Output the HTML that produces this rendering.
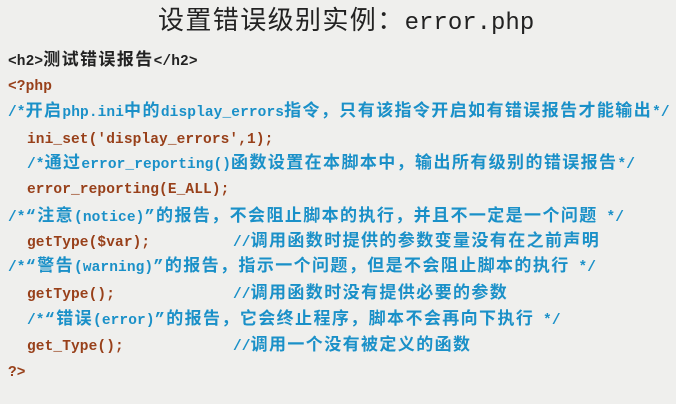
<!DOCTYPE html>
<html><head><meta charset="utf-8"><style>
html,body{margin:0;padding:0}
body{width:676px;height:404px;background:#efefed;position:relative;overflow:hidden;font-family:"Liberation Mono","Noto Sans CJK SC",monospace;}
.t{position:absolute;left:158px;top:4px;font-size:24px;line-height:36px;color:#222;white-space:pre;}
.t i{font-style:normal;font-size:26px;letter-spacing:1.4px}
.l{position:absolute;font-size:14.5px;line-height:22px;letter-spacing:0.1px;font-weight:bold;white-space:pre;}
.l i{font-style:normal;font-size:17px;letter-spacing:1.4px}
.k{color:#222}.b{color:#1a90c8}.r{color:#98401a}
</style></head><body>
<div class="t"><i>设置错误级别实例：</i>error.php</div>
<div class="l k" style="left:8px;top:51px">&lt;h2&gt;<i>测试错误报告</i>&lt;/h2&gt;</div>
<div class="l r" style="left:8px;top:76px">&lt;?php</div>
<div class="l b" style="left:8px;top:102px">/*<i>开启</i>php.ini<i>中的</i>display_errors<i>指令，只有该指令开启如有错误报告才能输出</i>*/</div>
<div class="l r" style="left:27px;top:129px">ini_set('display_errors',1);</div>
<div class="l b" style="left:27px;top:154px">/*<i>通过</i>error_reporting()<i>函数设置在本脚本中，输出所有级别的错误报告</i>*/</div>
<div class="l r" style="left:27px;top:179px">error_reporting(E_ALL);</div>
<div class="l b" style="left:8px;top:207px">/*<i>“注意</i>(notice)<i>”的报告，不会阻止脚本的执行，并且不一定是一个问题</i> */</div>
<div class="l r" style="left:27px;top:232px">getType($var);</div>
<div class="l b" style="left:233px;top:232px">//<i>调用函数时提供的参数变量没有在之前声明</i></div>
<div class="l b" style="left:8px;top:257px">/*<i>“警告</i>(warning)<i>”的报告，指示一个问题，但是不会阻止脚本的执行</i> */</div>
<div class="l r" style="left:27px;top:284px">getType();</div>
<div class="l b" style="left:233px;top:284px">//<i>调用函数时没有提供必要的参数</i></div>
<div class="l b" style="left:27px;top:310px">/*<i>“错误</i>(error)<i>”的报告，它会终止程序，脚本不会再向下执行</i> */</div>
<div class="l r" style="left:27px;top:336px">get_Type();</div>
<div class="l b" style="left:233px;top:336px">//<i>调用一个没有被定义的函数</i></div>
<div class="l r" style="left:8px;top:362px">?&gt;</div>
</body></html>
